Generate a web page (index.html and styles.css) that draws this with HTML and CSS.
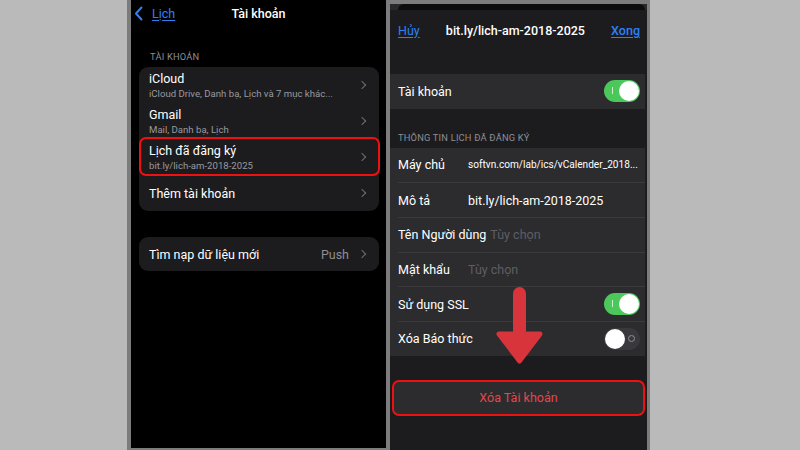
FILE: index.html
```html
<!DOCTYPE html>
<html lang="vi">
<head>
    <meta charset="UTF-8">
    <meta name="viewport" content="width=device-width, initial-scale=1.0">
    <title>Xóa lịch đã đăng ký</title>
    <link rel="stylesheet" href="styles.css">
</head>
<body>

<div class="frame">
    <!-- Left screen: account list -->
    <section class="screen screen-left">
        <header class="nav">
            <a class="nav-back">
                <svg width="9" height="15" viewBox="0 0 9 15"><path d="M7.5 1.5 L2 7.5 L7.5 13.5" fill="none" stroke="#2f80f5" stroke-width="2" stroke-linecap="round" stroke-linejoin="round"/></svg>
                <span class="link">Lịch</span>
            </a>
            <h1 class="nav-title">Tài khoản</h1>
        </header>

        <p class="section-label">TÀI KHOẢN</p>
        <ul class="group">
            <li class="row">
                <div class="row-text">
                    <span class="row-title">iCloud</span>
                    <span class="row-subtitle">iCloud Drive, Danh bạ, Lịch và 7 mục khác...</span>
                </div>
                <span class="chev"></span>
            </li>
            <li class="row">
                <div class="row-text">
                    <span class="row-title">Gmail</span>
                    <span class="row-subtitle">Mail, Danh bạ, Lịch</span>
                </div>
                <span class="chev"></span>
            </li>
            <li class="row row-marked">
                <div class="row-text">
                    <span class="row-title">Lịch đã đăng ký</span>
                    <span class="row-subtitle">bit.ly/lich-am-2018-2025</span>
                </div>
                <span class="chev"></span>
            </li>
            <li class="row">
                <div class="row-text">
                    <span class="row-title">Thêm tài khoản</span>
                </div>
                <span class="chev"></span>
            </li>
        </ul>

        <ul class="group group-fetch">
            <li class="row row-single">
                <span class="row-title">Tìm nạp dữ liệu mới</span>
                <span class="row-detail">Push</span>
                <span class="chev"></span>
            </li>
        </ul>
    </section>

    <!-- Right screen: subscribed calendar sheet -->
    <section class="screen screen-right">
        <div class="sheet-edge"><div class="sheet-edge-card"></div></div>

        <header class="sheet-nav">
            <span class="link">Hủy</span>
            <span class="sheet-title">bit.ly/lich-am-2018-2025</span>
            <span class="link link-bold">Xong</span>
        </header>

        <ul class="plain-group group-account">
            <li class="field">
                <span class="field-label">Tài khoản</span>
                <span class="switch on"></span>
            </li>
        </ul>

        <p class="section-label section-label-right">THÔNG TIN LỊCH ĐÃ ĐĂNG KÝ</p>
        <ul class="plain-group">
            <li class="field">
                <span class="field-label">Máy chủ</span>
                <span class="field-value field-small">softvn.com/lab/ics/vCalender_2018...</span>
            </li>
            <li class="field">
                <span class="field-label">Mô tả</span>
                <span class="field-value">bit.ly/lich-am-2018-2025</span>
            </li>
            <li class="field">
                <span class="field-label">Tên Người dùng</span>
                <span class="field-value placeholder">Tùy chọn</span>
            </li>
            <li class="field">
                <span class="field-label">Mật khẩu</span>
                <span class="field-value placeholder">Tùy chọn</span>
            </li>
            <li class="field">
                <span class="field-label">Sử dụng SSL</span>
                <span class="switch on"></span>
            </li>
            <li class="field">
                <span class="field-label">Xóa Báo thức</span>
                <span class="switch"></span>
            </li>
        </ul>

        <button class="delete-btn">Xóa Tài khoản</button>

        <!-- red arrow pointing at the delete button -->
        <svg class="arrow" width="50" height="82" viewBox="0 0 50 82">
            <rect x="18" y="3" width="13" height="50" rx="6.5" fill="#d8343b"/>
            <polygon points="4,50 45,50 24.5,77" fill="#d8343b" stroke="#d8343b" stroke-width="5" stroke-linejoin="round"/>
        </svg>
    </section>
</div>

</body>
</html>
```

FILE: styles.css
```css
body {
    margin: 0;
    background-color: #bababa;
    font-family: 'Roboto', 'Noto Sans', sans-serif;
    color: #fff;
}

ul {
    list-style: none;
    margin: 0;
    padding: 0;
}

.frame {
    width: 516px;
    height: 450px;
    margin-left: 127px;
    padding: 0 3px 0 4px;
    display: flex;
    gap: 4px;
    background-color: #7c7c7c;
}

.screen {
    position: relative;
    overflow: hidden;
}

.screen-left {
    width: 255px;
    height: 448px;
    background-color: #000;
}

.screen-right {
    width: 257px;
    margin-top: 4px;
    height: 446px;
    background-color: #1c1c1e;
}

.link {
    color: #2f80f5;
    text-decoration: underline;
    text-underline-offset: 2px;
}

/* left screen */
.nav {
    height: 26px;
    display: flex;
    align-items: center;
    position: relative;
}

.nav-back {
    display: flex;
    align-items: center;
    gap: 9px;
    padding-left: 3px;
    font-size: 12.5px;
}

.nav-title {
    position: absolute;
    left: 0;
    right: 0;
    margin: 0;
    text-align: center;
    font-size: 12.5px;
    font-weight: 500;
    pointer-events: none;
}

.section-label {
    margin: 25px 0 4px 19px;
    font-size: 9.3px;
    line-height: 12px;
    color: #8e8e93;
    letter-spacing: 0.2px;
}

.group {
    margin: 0 7px 0 8px;
    background-color: #1c1c1e;
    border-radius: 9px;
}

.row {
    position: relative;
    height: 36px;
    display: flex;
    align-items: center;
    padding: 0 14px 0 10px;
}

.row-text {
    flex: 1;
    display: flex;
    flex-direction: column;
}

.row-title {
    font-size: 12.5px;
    line-height: 15px;
}

.row-subtitle {
    font-size: 9.6px;
    line-height: 12px;
    margin-top: 2px;
    color: #9a9a9f;
}

.row-marked::after {
    content: "";
    position: absolute;
    left: 0;
    right: -1px;
    top: -2px;
    bottom: -1px;
    border: 2px solid #ee1111;
    border-radius: 7px;
}

.chev {
    width: 5px;
    height: 5px;
    border-top: 1.5px solid #6e6e73;
    border-right: 1.5px solid #6e6e73;
    transform: rotate(45deg);
}

.group-fetch {
    margin-top: 26px;
}

.row-single {
    height: 34px;
}

.row-single .row-title {
    flex: 1;
}

.row-detail {
    font-size: 12.5px;
    color: #8e8e93;
    margin-right: 10px;
}

/* right screen */
.sheet-edge {
    height: 6px;
    background-color: #29292b;
    padding: 0 2px 0 8px;
}

.sheet-edge-card {
    height: 100%;
    background-color: #0d0d0e;
    border-radius: 8px 8px 0 0;
}

.sheet-nav {
    height: 40px;
    display: flex;
    align-items: center;
    justify-content: space-between;
    padding: 0 7px 0 8px;
    font-size: 12.5px;
}

.sheet-title {
    font-weight: 500;
}

.link-bold {
    font-weight: 500;
}

.plain-group {
    margin-right: 2px;
    background-color: #2c2c2e;
}

.group-account {
    margin-top: 24px;
}

.field {
    height: 34.66px;
    margin-left: 8px;
    padding-right: 5px;
    display: flex;
    align-items: center;
    font-size: 12.5px;
    box-sizing: border-box;
}

.field + .field {
    border-top: 1px solid #3a3a3c;
}

.field-label {
    min-width: 66px;
    margin-right: 4px;
    white-space: nowrap;
}

.field-value {
    flex: 1;
    white-space: nowrap;
}

.field-small {
    font-size: 10.1px;
}

.placeholder {
    color: #5e5e63;
}

.section-label-right {
    margin: 23px 0 4px 8px;
}

.switch {
    position: relative;
    margin-left: auto;
    width: 36px;
    height: 22px;
    border-radius: 11px;
    background-color: #39393d;
}

.switch::before {
    content: "";
    position: absolute;
    top: 7px;
    right: 5px;
    width: 5px;
    height: 5px;
    border: 1px solid #8e8e93;
    border-radius: 50%;
}

.switch::after {
    content: "";
    position: absolute;
    top: 1px;
    left: 1px;
    width: 20px;
    height: 20px;
    border-radius: 50%;
    background-color: #fff;
}

.switch.on {
    background-color: #4cc85b;
}

.switch.on::before {
    top: 7px;
    left: 8px;
    right: auto;
    width: 0;
    height: 7px;
    border: none;
    border-left: 1px solid #c9f0cf;
    border-radius: 0;
}

.switch.on::after {
    left: 15px;
}

.delete-btn {
    display: block;
    width: 253px;
    height: 36px;
    margin: 24px 0 0 2px;
    background-color: #2c2c2e;
    border: 2px solid #ee1111;
    border-radius: 7px;
    color: #e0474c;
    font-family: inherit;
    font-size: 12.5px;
}

.arrow {
    position: absolute;
    left: 105px;
    top: 280px;
}
```
